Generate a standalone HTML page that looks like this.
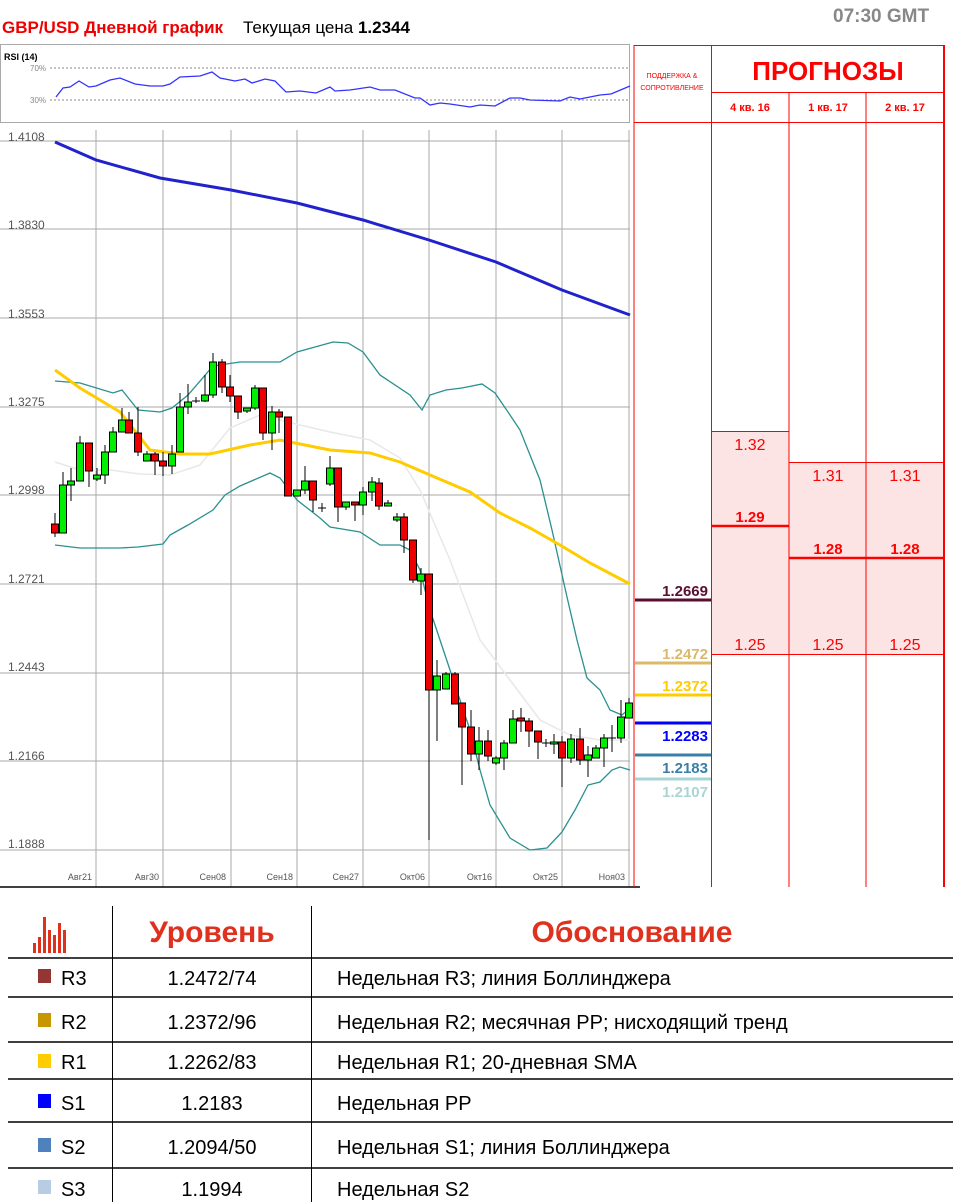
<!DOCTYPE html>
<html><head><meta charset="utf-8"><style>
html,body{margin:0;padding:0;background:#fff;}
body{width:953px;height:1202px;position:relative;overflow:hidden;font-family:"Liberation Sans Narrow","Liberation Sans",sans-serif;}
.a{position:absolute;white-space:nowrap;}
</style></head><body>
<div class="a" style="left:2px;top:18px;font-size:17px;font-weight:bold;color:#e00;">GBP/USD Дневной график</div>
<div class="a" style="left:243px;top:18px;font-size:17px;color:#000;">Текущая цена <b>1.2344</b></div>
<div class="a" style="left:833px;top:6px;font-size:19px;font-weight:bold;color:#888;">07:30 GMT</div>

<svg class="a" style="left:0;top:0" width="953" height="900" xmlns="http://www.w3.org/2000/svg" font-family="Liberation Sans Narrow, Liberation Sans, sans-serif">
<rect x="0.5" y="44.5" width="629" height="78" fill="#fff" stroke="#aaa"/>
<text x="4" y="60" font-size="9" font-weight="bold">RSI (14)</text>
<line x1="50" y1="68" x2="630" y2="68" stroke="#888" stroke-dasharray="2,2"/>
<line x1="50" y1="100" x2="630" y2="100" stroke="#888" stroke-dasharray="2,2"/>
<text x="30" y="71" font-size="8" fill="#888">70%</text>
<text x="30" y="103" font-size="8" fill="#888">30%</text>
<polyline fill="none" stroke="#33f" stroke-width="1.3" points="56,97 63,88 70,87 79,81 89,87 96,86 110,80 120,78 135,84 150,86 163,86 170,84 180,77 200,76 212,72 220,78 235,81 245,79 252,83 265,79 275,81 286,92 300,91 316,93 330,87 335,91 350,90 370,87 380,90 395,90 415,98 420,98 430,105 440,103 450,104 470,107 480,105 495,106 510,98 520,98 530,100 560,101 570,97 580,99 600,95 611,94 630,86"/>
<g stroke="#aaa" stroke-width="1">
<line x1="0" y1="141" x2="630" y2="141"/><line x1="0" y1="229" x2="630" y2="229"/><line x1="0" y1="318" x2="630" y2="318"/><line x1="0" y1="407" x2="630" y2="407"/><line x1="0" y1="495" x2="630" y2="495"/><line x1="0" y1="584" x2="630" y2="584"/><line x1="0" y1="673" x2="630" y2="673"/><line x1="0" y1="761" x2="630" y2="761"/><line x1="0" y1="850" x2="630" y2="850"/>
<line x1="96" y1="130" x2="96" y2="887"/><line x1="163" y1="130" x2="163" y2="887"/><line x1="231" y1="130" x2="231" y2="887"/><line x1="297" y1="130" x2="297" y2="887"/><line x1="363" y1="130" x2="363" y2="887"/><line x1="429" y1="130" x2="429" y2="887"/><line x1="496" y1="130" x2="496" y2="887"/><line x1="562" y1="130" x2="562" y2="887"/><line x1="629" y1="130" x2="629" y2="887"/>
</g>
<line x1="0" y1="887" x2="640" y2="887" stroke="#000" stroke-width="1.5"/>
<g font-size="12" fill="#555">
<text x="8" y="141">1.4108</text><text x="8" y="229">1.3830</text><text x="8" y="318">1.3553</text><text x="8" y="406">1.3275</text><text x="8" y="494">1.2998</text><text x="8" y="583">1.2721</text><text x="8" y="671">1.2443</text><text x="8" y="760">1.2166</text><text x="8" y="848">1.1888</text>
</g>
<g font-size="9" fill="#555" text-anchor="end">
<text x="92" y="880">Авг21</text><text x="159" y="880">Авг30</text><text x="226" y="880">Сен08</text><text x="293" y="880">Сен18</text><text x="359" y="880">Сен27</text><text x="425" y="880">Окт06</text><text x="492" y="880">Окт16</text><text x="558" y="880">Окт25</text><text x="625" y="880">Ноя03</text>
</g>
<polyline fill="none" stroke="#22c" stroke-width="3" points="55,142 96,160 160,178 231,190 297,203 363,220 429,240 496,262 562,290 630,315"/>
<polyline fill="none" stroke="#e8e8e8" stroke-width="1.5" points="55,462 80,470 110,470 140,474 170,475 200,465 230,428 260,415 300,425 330,432 370,440 400,458 420,490 450,560 480,640 510,680 540,720 570,735 600,740 630,740"/>
<polyline fill="none" stroke="#2a9090" stroke-width="1.3" points="55,381 80,383 113,393 122,390 138,410 160,412 172,408 188,395 213,366 240,362 280,362 297,352 333,342 348,343 363,352 380,375 410,395 422,410 430,395 446,390 462,388 482,384 495,393 510,415 520,430 540,480 552,530 567,597 577,640 587,678 600,690 610,710 622,715 630,708"/>
<polyline fill="none" stroke="#2a9090" stroke-width="1.3" points="55,545 80,548 120,548 138,547 163,544 170,535 188,525 213,510 225,495 240,486 270,473 280,478 297,500 320,518 330,527 360,532 380,545 400,545 410,550 420,570 430,610 440,640 450,670 460,700 470,730 480,770 490,805 510,838 530,850 547,848 562,832 575,810 588,785 600,782 612,770 620,767 630,770"/>
<polyline fill="none" stroke="#fc0" stroke-width="3" points="55,370 80,388 120,412 150,450 180,454 210,454 250,445 280,440 330,450 370,453 400,462 430,475 470,492 500,513 530,528 560,545 590,563 630,584"/>
<g stroke="#000" stroke-width="1">
<line x1="55" y1="513" x2="55" y2="537"/><rect x="51.5" y="524" width="7" height="9" fill="#e00"/>
<line x1="63" y1="472" x2="63" y2="533"/><rect x="59.5" y="485" width="7" height="48" fill="#0e0"/>
<line x1="71" y1="468" x2="71" y2="501"/><rect x="67.5" y="481" width="7" height="4" fill="#0e0"/>
<line x1="80" y1="436" x2="80" y2="481"/><rect x="76.5" y="443" width="7" height="38" fill="#0e0"/>
<line x1="89" y1="443" x2="89" y2="487"/><rect x="85.5" y="443" width="7" height="28" fill="#e00"/>
<line x1="97" y1="468" x2="97" y2="481"/><rect x="93.5" y="475" width="7" height="4" fill="#0e0"/>
<line x1="105" y1="445" x2="105" y2="484"/><rect x="101.5" y="452" width="7" height="23" fill="#0e0"/>
<line x1="113" y1="427" x2="113" y2="452"/><rect x="109.5" y="432" width="7" height="20" fill="#0e0"/>
<line x1="122" y1="408" x2="122" y2="432"/><rect x="118.5" y="420" width="7" height="12" fill="#0e0"/>
<line x1="129" y1="412" x2="129" y2="433"/><rect x="125.5" y="420" width="7" height="13" fill="#e00"/>
<line x1="138" y1="407" x2="138" y2="456"/><rect x="134.5" y="433" width="7" height="19" fill="#e00"/>
<line x1="147" y1="451" x2="147" y2="461"/><rect x="143.5" y="454" width="7" height="7" fill="#0e0"/>
<line x1="155" y1="452" x2="155" y2="475"/><rect x="151.5" y="454" width="7" height="7" fill="#e00"/>
<line x1="163" y1="452" x2="163" y2="476"/><rect x="159.5" y="461" width="7" height="5" fill="#e00"/>
<line x1="172" y1="445" x2="172" y2="474"/><rect x="168.5" y="454" width="7" height="12" fill="#0e0"/>
<line x1="180" y1="393" x2="180" y2="452"/><rect x="176.5" y="407" width="7" height="45" fill="#0e0"/>
<line x1="188" y1="384" x2="188" y2="414"/><rect x="184.5" y="402" width="7" height="5" fill="#0e0"/>
<line x1="196" y1="397" x2="196" y2="403"/><line x1="192" y1="401" x2="200" y2="401"/>
<line x1="205" y1="375" x2="205" y2="402"/><rect x="201.5" y="395" width="7" height="6" fill="#0e0"/>
<line x1="213" y1="353" x2="213" y2="398"/><rect x="209.5" y="362" width="7" height="33" fill="#0e0"/>
<line x1="222" y1="359" x2="222" y2="393"/><rect x="218.5" y="362" width="7" height="25" fill="#e00"/>
<line x1="230" y1="375" x2="230" y2="402"/><rect x="226.5" y="387" width="7" height="9" fill="#e00"/>
<line x1="238" y1="396" x2="238" y2="419"/><rect x="234.5" y="396" width="7" height="16" fill="#e00"/>
<line x1="247" y1="408" x2="247" y2="413"/><rect x="243.5" y="408" width="7" height="3" fill="#0e0"/>
<line x1="255" y1="385" x2="255" y2="410"/><rect x="251.5" y="388" width="7" height="20" fill="#0e0"/>
<line x1="263" y1="388" x2="263" y2="440"/><rect x="259.5" y="388" width="7" height="45" fill="#e00"/>
<line x1="272" y1="406" x2="272" y2="450"/><rect x="268.5" y="412" width="7" height="21" fill="#0e0"/>
<line x1="279" y1="409" x2="279" y2="433"/><rect x="275.5" y="412" width="7" height="5" fill="#e00"/>
<line x1="288" y1="417" x2="288" y2="496"/><rect x="284.5" y="417" width="7" height="79" fill="#e00"/>
<line x1="297" y1="490" x2="297" y2="496"/><rect x="293.5" y="490" width="7" height="6" fill="#0e0"/>
<line x1="305" y1="466" x2="305" y2="494"/><rect x="301.5" y="481" width="7" height="9" fill="#0e0"/>
<line x1="313" y1="481" x2="313" y2="512"/><rect x="309.5" y="481" width="7" height="19" fill="#e00"/>
<line x1="322" y1="503" x2="322" y2="512"/><line x1="318" y1="508" x2="326" y2="508"/>
<line x1="330" y1="456" x2="330" y2="486"/><rect x="326.5" y="468" width="7" height="16" fill="#0e0"/>
<line x1="338" y1="468" x2="338" y2="522"/><rect x="334.5" y="468" width="7" height="39" fill="#e00"/>
<line x1="346" y1="502" x2="346" y2="510"/><rect x="342.5" y="502" width="7" height="5" fill="#0e0"/>
<line x1="355" y1="502" x2="355" y2="521"/><rect x="351.5" y="502" width="7" height="3" fill="#e00"/>
<line x1="363" y1="487" x2="363" y2="515"/><rect x="359.5" y="492" width="7" height="13" fill="#0e0"/>
<line x1="372" y1="477" x2="372" y2="501"/><rect x="368.5" y="482" width="7" height="10" fill="#0e0"/>
<line x1="379" y1="478" x2="379" y2="510"/><rect x="375.5" y="483" width="7" height="23" fill="#e00"/>
<line x1="388" y1="500" x2="388" y2="506"/><rect x="384.5" y="503" width="7" height="3" fill="#0e0"/>
<line x1="397" y1="513" x2="397" y2="522"/><rect x="393.5" y="517" width="7" height="3" fill="#0e0"/>
<line x1="404" y1="513" x2="404" y2="553"/><rect x="400.5" y="517" width="7" height="23" fill="#e00"/>
<line x1="413" y1="540" x2="413" y2="583"/><rect x="409.5" y="540" width="7" height="40" fill="#e00"/>
<line x1="421" y1="568" x2="421" y2="595"/><rect x="417.5" y="574" width="7" height="7" fill="#0e0"/>
<line x1="429" y1="574" x2="429" y2="840"/><rect x="425.5" y="574" width="7" height="116" fill="#e00"/>
<line x1="437" y1="660" x2="437" y2="741"/><rect x="433.5" y="676" width="7" height="14" fill="#0e0"/>
<line x1="446" y1="672" x2="446" y2="689"/><rect x="442.5" y="674" width="7" height="15" fill="#0e0"/>
<line x1="455" y1="672" x2="455" y2="704"/><rect x="451.5" y="674" width="7" height="30" fill="#e00"/>
<line x1="462" y1="703" x2="462" y2="785"/><rect x="458.5" y="703" width="7" height="24" fill="#e00"/>
<line x1="471" y1="710" x2="471" y2="761"/><rect x="467.5" y="727" width="7" height="27" fill="#e00"/>
<line x1="479" y1="727" x2="479" y2="770"/><rect x="475.5" y="741" width="7" height="13" fill="#0e0"/>
<line x1="488" y1="730" x2="488" y2="761"/><rect x="484.5" y="741" width="7" height="15" fill="#e00"/>
<line x1="496" y1="756" x2="496" y2="765"/><rect x="492.5" y="758" width="7" height="5" fill="#0e0"/>
<line x1="504" y1="740" x2="504" y2="770"/><rect x="500.5" y="743" width="7" height="15" fill="#0e0"/>
<line x1="513" y1="710" x2="513" y2="743"/><rect x="509.5" y="719" width="7" height="24" fill="#0e0"/>
<line x1="521" y1="708" x2="521" y2="732"/><rect x="517.5" y="718" width="7" height="3" fill="#e00"/>
<line x1="529" y1="718" x2="529" y2="747"/><rect x="525.5" y="721" width="7" height="10" fill="#e00"/>
<line x1="538" y1="731" x2="538" y2="759"/><rect x="534.5" y="731" width="7" height="11" fill="#e00"/>
<line x1="546" y1="739" x2="546" y2="747"/><line x1="542" y1="743" x2="550" y2="743"/>
<line x1="554" y1="734" x2="554" y2="754"/><rect x="550.5" y="742" width="7" height="2" fill="#0e0"/>
<line x1="562" y1="736" x2="562" y2="787"/><rect x="558.5" y="742" width="7" height="16" fill="#e00"/>
<line x1="571" y1="734" x2="571" y2="763"/><rect x="567.5" y="739" width="7" height="19" fill="#0e0"/>
<line x1="580" y1="728" x2="580" y2="765"/><rect x="576.5" y="739" width="7" height="21" fill="#e00"/>
<line x1="588" y1="746" x2="588" y2="777"/><rect x="584.5" y="755" width="7" height="5" fill="#0e0"/>
<line x1="596" y1="745" x2="596" y2="758"/><rect x="592.5" y="748" width="7" height="10" fill="#0e0"/>
<line x1="604" y1="734" x2="604" y2="767"/><rect x="600.5" y="738" width="7" height="10" fill="#0e0"/>
<line x1="612" y1="725" x2="612" y2="752"/><line x1="608" y1="738" x2="616" y2="738"/>
<line x1="621" y1="700" x2="621" y2="743"/><rect x="617.5" y="717" width="7" height="21" fill="#0e0"/>
<line x1="629" y1="698" x2="629" y2="718"/><rect x="625.5" y="703" width="7" height="15" fill="#0e0"/>
</g>
<rect x="712" y="431" width="77" height="223" fill="#fde4e4"/>
<rect x="789" y="462" width="155" height="192" fill="#fde4e4"/>
<g stroke="#f00" stroke-width="1">
<line x1="634" y1="45" x2="634" y2="887"/><line x1="711.5" y1="92" x2="711.5" y2="887"/><line x1="789" y1="92" x2="789" y2="887"/><line x1="866" y1="92" x2="866" y2="887"/>
<line x1="711.5" y1="45" x2="711.5" y2="122"/>
<line x1="634" y1="45.5" x2="944" y2="45.5"/><line x1="711" y1="92.5" x2="944" y2="92.5"/><line x1="634" y1="122.5" x2="944" y2="122.5"/>
<line x1="712" y1="431.5" x2="789" y2="431.5"/><line x1="789" y1="462.5" x2="944" y2="462.5"/><line x1="712" y1="654.5" x2="944" y2="654.5"/>
</g>
<line x1="944" y1="45" x2="944" y2="887" stroke="#f00" stroke-width="2"/>
<line x1="712" y1="526" x2="789" y2="526" stroke="#f00" stroke-width="2.5"/>
<line x1="789" y1="558" x2="944" y2="558" stroke="#f00" stroke-width="2.5"/>
<g fill="#f00" text-anchor="middle">
<text x="672" y="78" font-size="7">ПОДДЕРЖКА &amp;</text>
<text x="672" y="90" font-size="7">СОПРОТИВЛЕНИЕ</text>
<text x="828" y="80" font-size="26" font-weight="bold">ПРОГНОЗЫ</text>
<text x="750" y="111" font-size="11" font-weight="bold">4 кв. 16</text>
<text x="828" y="111" font-size="11" font-weight="bold">1 кв. 17</text>
<text x="905" y="111" font-size="11" font-weight="bold">2 кв. 17</text>
<text x="750" y="450" font-size="16">1.32</text>
<text x="828" y="481" font-size="16">1.31</text><text x="905" y="481" font-size="16">1.31</text>
<text x="750" y="522" font-size="15" font-weight="bold">1.29</text>
<text x="828" y="554" font-size="15" font-weight="bold">1.28</text><text x="905" y="554" font-size="15" font-weight="bold">1.28</text>
<text x="750" y="650" font-size="16">1.25</text><text x="828" y="650" font-size="16">1.25</text><text x="905" y="650" font-size="16">1.25</text>
</g>
<g stroke-width="3">
<line x1="635" y1="600" x2="711" y2="600" stroke="#5a0f30"/>
<line x1="635" y1="663" x2="711" y2="663" stroke="#dcb86a"/>
<line x1="635" y1="695" x2="711" y2="695" stroke="#fc0"/>
<line x1="635" y1="723" x2="711" y2="723" stroke="#00f"/>
<line x1="635" y1="755" x2="711" y2="755" stroke="#3a7fa8"/>
<line x1="635" y1="779" x2="711" y2="779" stroke="#aad4d4"/>
</g>
<g font-size="15" font-weight="bold" text-anchor="end">
<text x="708" y="596" fill="#5a0f30">1.2669</text>
<text x="708" y="659" fill="#dcb86a">1.2472</text>
<text x="708" y="691" fill="#fc0">1.2372</text>
<text x="708" y="741" fill="#00f">1.2283</text>
<text x="708" y="773" fill="#3a7fa8">1.2183</text>
<text x="708" y="797" fill="#aad4d4">1.2107</text>
</g>
</svg>

<svg class="a" style="left:0;top:890px" width="953" height="312" xmlns="http://www.w3.org/2000/svg" font-family="Liberation Sans Narrow, Liberation Sans, sans-serif">
<g fill="#e0301e">
<rect x="33" y="53" width="3" height="10"/><rect x="38" y="47" width="3" height="16"/><rect x="43" y="27" width="3" height="36"/><rect x="48" y="40" width="3" height="23"/><rect x="53" y="45" width="3" height="18"/><rect x="58" y="33" width="3" height="30"/><rect x="63" y="40" width="3" height="23"/>
</g>
<line x1="112.5" y1="16" x2="112.5" y2="312" stroke="#000"/>
<line x1="311.5" y1="16" x2="311.5" y2="312" stroke="#000"/>
<g stroke="#000" stroke-width="1.5">
<line x1="8" y1="68" x2="953" y2="68"/><line x1="8" y1="107" x2="953" y2="107"/><line x1="8" y1="152" x2="953" y2="152"/><line x1="8" y1="189" x2="953" y2="189"/><line x1="8" y1="232" x2="953" y2="232"/><line x1="8" y1="278" x2="953" y2="278"/>
</g>
<g font-size="30" font-weight="bold" fill="#e0301e" text-anchor="middle">
<text x="212" y="52">Уровень</text><text x="632" y="52">Обоснование</text>
</g>
<rect x="38" y="79" width="13" height="14" fill="#943634"/>
<rect x="38" y="123" width="13" height="14" fill="#c89600"/>
<rect x="38" y="164" width="13" height="14" fill="#ffcc00"/>
<rect x="38" y="204" width="13" height="14" fill="#0000ff"/>
<rect x="38" y="248" width="13" height="14" fill="#4f81bd"/>
<rect x="38" y="290" width="13" height="14" fill="#b8cce4"/>
<g font-size="20" fill="#000">
<text x="61" y="95">R3</text><text x="61" y="139">R2</text><text x="61" y="179">R1</text><text x="61" y="220">S1</text><text x="61" y="264">S2</text><text x="61" y="306">S3</text>
<g text-anchor="middle">
<text x="212" y="95">1.2472/74</text><text x="212" y="139">1.2372/96</text><text x="212" y="179">1.2262/83</text><text x="212" y="220">1.2183</text><text x="212" y="264">1.2094/50</text><text x="212" y="306">1.1994</text>
</g>
<text x="337" y="95">Недельная R3; линия Боллинджера</text>
<text x="337" y="139">Недельная R2; месячная PP; нисходящий тренд</text>
<text x="337" y="179">Недельная R1; 20-дневная SMA</text>
<text x="337" y="220">Недельная PP</text>
<text x="337" y="264">Недельная S1; линия Боллинджера</text>
<text x="337" y="306">Недельная S2</text>
</g>
</svg>
</body></html>
